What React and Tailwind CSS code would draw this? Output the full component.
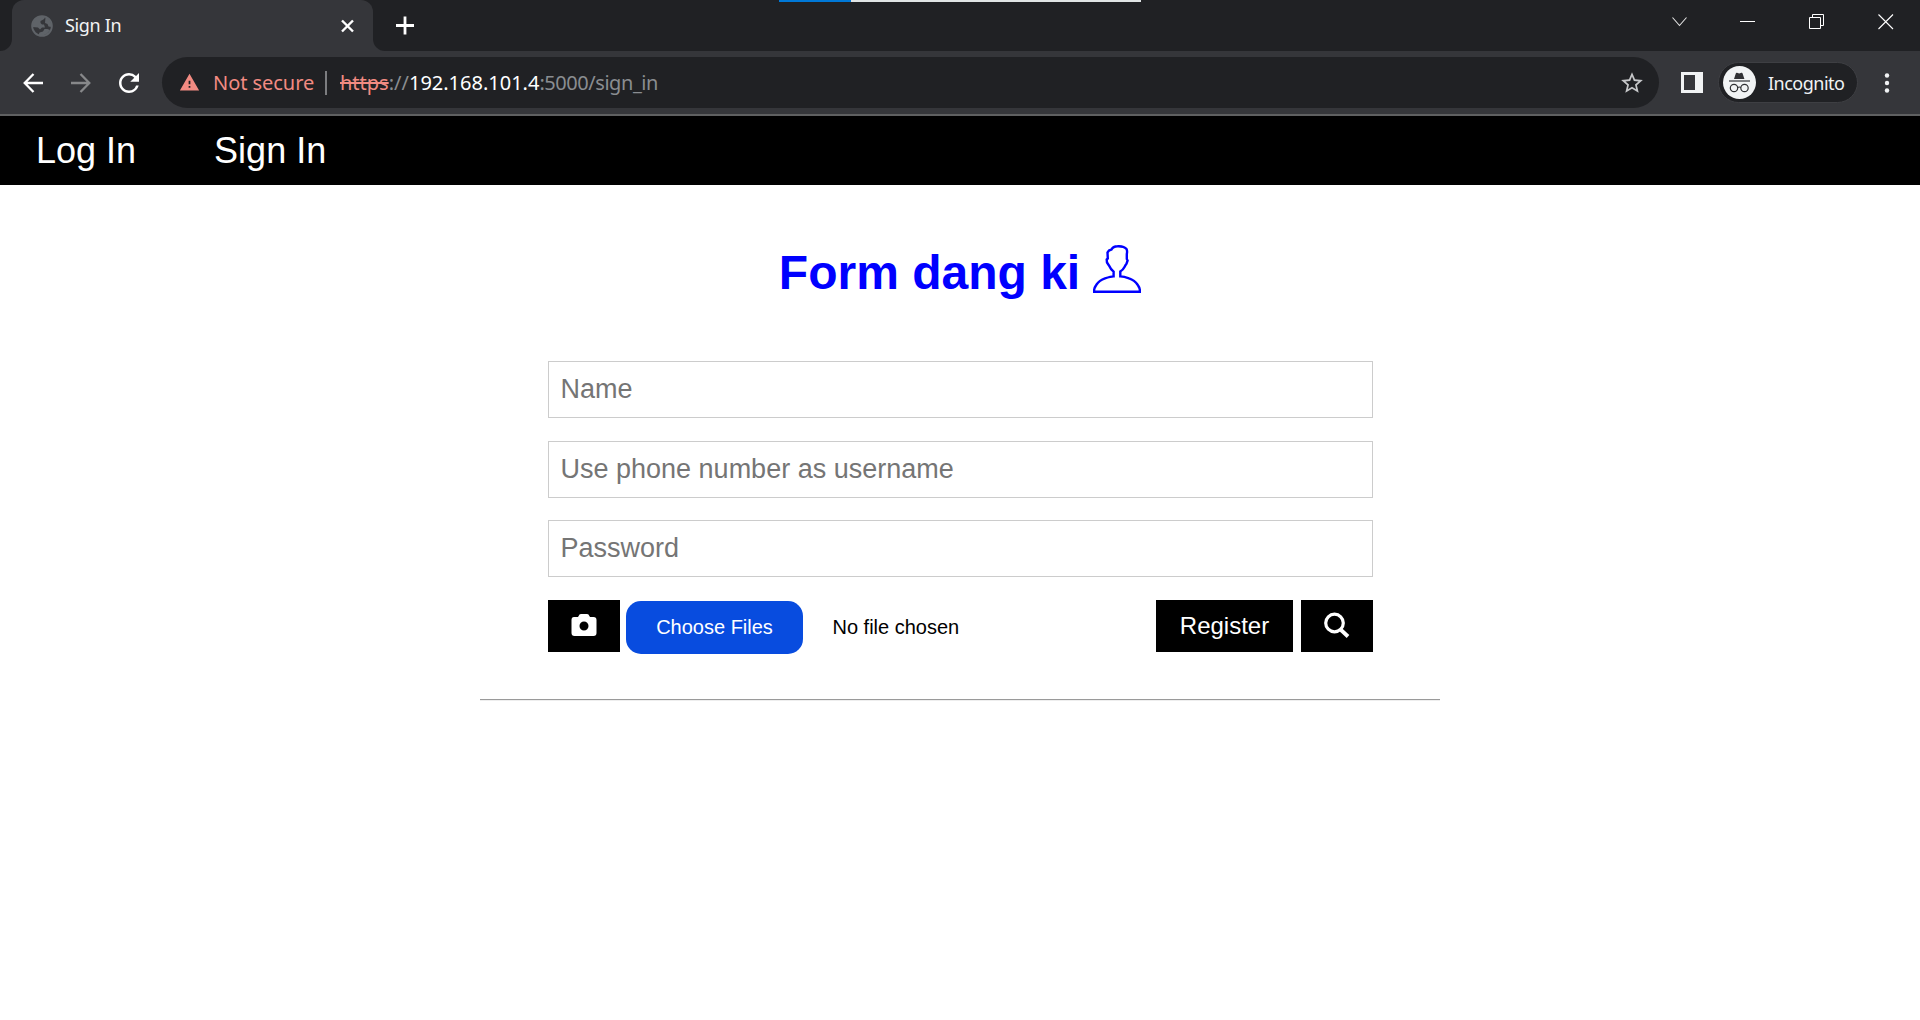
import React from "react";
import { MdRefresh, MdStarBorder, MdWarning } from "react-icons/md";

function TabStrip() {
  return (
    <div className="relative flex h-[51px] bg-[#202124]">
      <div className="absolute left-[779px] top-0 flex h-[2px] w-[362px] bg-[#e0e4e5]">
        <div className="h-full w-[72px] bg-[#0078d7]" />
      </div>
      <div className="flex w-3 items-end bg-[#35363a]">
        <div className="h-full w-full rounded-br-[12px] bg-[#202124]" />
      </div>
      <div className="h-full w-[361px] bg-[#202124]">
        <div className="flex h-full items-center rounded-t-[12px] bg-[#35363a] pl-[19px] pr-[15px]">
          <svg viewBox="0 0 22 22" className="size-[22px]">
            <circle cx="11" cy="11" r="9.9" fill="none" stroke="#5f6368" strokeWidth="1.8" />
            <path d="M1.500 11Q1.500 4 8.500 1.500L14 2Q13.500 4.500 11.500 5L9.500 6V8L11 9.500H13L14 12.500H11L9 14.500L7 12.500L1.500 12ZM14.500 2Q20.500 4.500 20.500 12L17.500 11.500L16.500 9L14 8ZM7.500 20L8.500 17.500L12 16.500L13.500 14H16.500L19 15Q15.500 21.500 7.500 20Z" fill="#5f6368" />
          </svg>
          <span className="mb-px ml-[12px] text-[18px] leading-6 tracking-[-0.35px] text-[#f1f3f4]">Sign In</span>
          <svg viewBox="0 0 20 20" className="ml-auto size-5" stroke="#fff" strokeWidth="2.4">
            <path d="M4 4.5 15 15.5M15 4.5 4 15.5" />
          </svg>
        </div>
      </div>
      <div className="flex flex-1 bg-[#35363a]">
        <div className="flex h-full flex-1 rounded-bl-[12px] bg-[#202124]">
          <svg viewBox="0 0 20 20" className="ml-[22px] mt-[15px] size-5" stroke="#fff" strokeWidth="2.8">
            <path d="M1 10.5H19M10 1.5V19.5" />
          </svg>
          <div className="ml-auto mt-[14px] flex">
            <svg viewBox="0 0 16 16" className="mr-[52px] size-4" fill="none" stroke="#e3e3e3" strokeWidth="1.1">
              <path d="M.5 3.5 7.5 11.5 14.5 3.5" />
            </svg>
            <svg viewBox="0 0 16 16" className="mr-[53px] size-4" stroke="#fff" strokeWidth="1">
              <path d="M0 7.5H15" />
            </svg>
            <svg viewBox="0 0 16 16" className="mr-[53px] size-4" fill="none" stroke="#fff" strokeWidth="1">
              <path d="M.5 3.5H11.5V14.5H.5ZM3.5 3V.5H14.5V11.5H12" />
            </svg>
            <svg viewBox="0 0 16 16" className="mr-[26px] size-4" stroke="#fff" strokeWidth="1.1">
              <path d="M.5.5 15 15M15 .5.5 15" />
            </svg>
          </div>
        </div>
      </div>
    </div>
  );
}

function Toolbar() {
  return (
    <div className="flex h-[65px] items-center border-b-2 border-[#5f6061] bg-[#35363a]">
      <svg viewBox="0 0 20 20" className="ml-[23px] size-5" fill="none" stroke="#fff" strokeWidth="2.3">
        <path d="M20 10H2M10.5 1 1.7 10 10.5 19" />
      </svg>
      <svg viewBox="0 0 20 20" className="ml-[28px] size-5" fill="none" stroke="#87888a" strokeWidth="2.3">
        <path d="M0 10H18M9.5 1 18.3 10 9.5 19" />
      </svg>
      <MdRefresh className="ml-[23px] size-[30px] text-white" />
      <div className="ml-[18px] flex h-[51px] w-[1497px] items-center rounded-full bg-[#202124]">
        <MdWarning className="ml-[17px] size-[21px] text-[#f28b82]" />
        <span className="ml-[13px] w-[101px] whitespace-nowrap text-[20px] leading-7 tracking-[-0.05px] text-[#f28b82]">Not secure</span>
        <div className="ml-[11px] h-6 w-[2px] bg-[#7c7d80]" />
        <div className="ml-[13px] whitespace-nowrap text-[20px] leading-7 text-[#8a8d91]">
          <span className="text-[#f28b82] line-through">https</span>://
          <span className="text-white">192.168.101.4</span><span className="tracking-[-0.45px]">:5000/sign_in</span>
        </div>
        <MdStarBorder className="ml-auto mr-[14px] size-[26px] text-[#c6c7c9]" />
      </div>
      <div className="ml-[22px] h-[21px] w-[22px] border-[3px] border-r-[8px] border-[#f1f3f4]" />
      <div className="ml-[15px] flex h-[41px] w-[140px] items-center rounded-full border border-[#3e3f43] bg-[#202124] pl-[4px]">
        <svg viewBox="0 0 33 33" className="size-[33px]">
          <circle cx="16.5" cy="16.5" r="16.5" fill="#f1f3f4" />
          <path d="M11 13 12.8 7.4q.3-.8 1.2-.6l2.200.6 2.200-.6q.9-.2 1.200.6l1.800 5.600z" fill="#303134" />
          <path d="M6 14.400H27V15.600H6Z" fill="#303134" />
          <g fill="none" stroke="#303134" strokeWidth="1.200">
            <circle cx="11" cy="22" r="3.700" />
            <circle cx="21.500" cy="22" r="3.700" />
            <path d="M14.700 21.500q1.500-1 3.100 0" />
          </g>
        </svg>
        <span className="ml-[12px] text-[18px] leading-6 tracking-[-0.5px] text-[#f1f3f4]">Incognito</span>
      </div>
      <svg viewBox="0 0 6 20" className="ml-[26px] h-5 w-[6px]" fill="#f1f3f4">
        <circle cx="3" cy="2.5" r="2.2" />
        <circle cx="3" cy="10" r="2.2" />
        <circle cx="3" cy="17.5" r="2.2" />
      </svg>
    </div>
  );
}

function Field({ placeholder, type = "text" }) {
  return (
    <input
      type={type}
      placeholder={placeholder}
      className="block h-[57px] w-[825px] border border-[#ccc] px-3 pb-px text-[27px] placeholder:text-[#757575] placeholder:opacity-100"
    />
  );
}

export default function App() {
  return (
    <div className="h-[1020px] w-[1920px] overflow-hidden bg-white">
      <div className="font-['Noto_Sans',sans-serif]">
        <TabStrip />
        <Toolbar />
      </div>
      <div className="font-['Liberation_Sans',Arial,sans-serif]">
        <nav className="flex h-[69px] items-center bg-black pl-9 text-[36px] text-white">
          <a>Log In</a>
          <a className="ml-[78px]">Sign In</a>
        </nav>
        <h1 className="flex h-[176px] items-start justify-center pt-[60px] text-[48px] font-bold leading-[55px] text-[#00f]">
          Form dang ki
          <svg viewBox="0 0 48 48" className="ml-[13px] size-12" fill="none" stroke="#00f" strokeWidth="2.4">
            <path d="M1 46.800Q1 43 3.200 40Q6.500 35 12 33.300Q18 31.500 20.600 31.400V26.600Q17.500 24 16 20.500L14 17.500L13.700 14.500L14.800 13.500L14.500 7.500Q15.500 5 18.500 4.500Q20 1.200 24.500 1.200Q31 1 33.500 4Q34.500 6 33.800 9V14L34.600 15.500L33.600 18.500Q32.500 20 31.500 22Q30 25 27.300 26.500V31.400Q31 31.600 36 33.300Q41.500 35 44.800 40Q47 43 47 46.800Z" />
          </svg>
        </h1>
        <form className="mx-auto w-[825px]">
          <Field placeholder="Name" />
          <div className="h-[23px]" />
          <Field placeholder="Use phone number as username" />
          <div className="h-[22px]" />
          <Field placeholder="Password" type="password" />
          <div className="mt-[23px] flex h-[54px] items-start">
            <button type="button" className="flex h-[52px] w-[72px] justify-center bg-black pt-[13px]">
              <svg viewBox="0 0 26 24" className="h-6 w-[26px]" fill="#fff">
                <path fillRule="evenodd" d="M3 4H7L8.5 1.5Q9 1 10 1H16Q17 1 17.5 1.5L19 4H22.5Q25.500 4 25.500 7V20Q25.500 23 22.500 23H3.500Q.5 23 .5 20V7Q.5 4 3 4ZM13 8.500A4.500 4.500 0 1 0 13 17.500A4.500 4.500 0 1 0 13 8.500Z" />
              </svg>
            </button>
            <button type="button" className="ml-[6px] mt-px h-[53px] w-[177px] rounded-[15px] bg-[#084cdf] pb-px pl-px text-[20px] text-white">Choose Files</button>
            <span className="ml-[30px] mt-[14px] text-[20px] leading-[26px] text-black">No file chosen</span>
            <button type="button" className="ml-auto h-[52px] w-[137px] bg-black pl-px text-[24px] text-white">Register</button>
            <button type="button" className="ml-2 flex h-[52px] w-[72px] bg-black pl-[22px] pt-3">
              <svg viewBox="0 0 27 27" className="size-[27px]" fill="none" stroke="#fff" strokeWidth="3.2">
                <circle cx="11.5" cy="11" r="8.8" />
                <path d="M17.5 17.5 25 24.5" strokeWidth="3.800" />
              </svg>
            </button>
          </div>
        </form>
        <div className="mx-auto mt-[45px] w-[960px] bg-[#eee] pb-px">
          <div className="h-px bg-[#9a9a9a]" />
        </div>
      </div>
    </div>
  );
}
